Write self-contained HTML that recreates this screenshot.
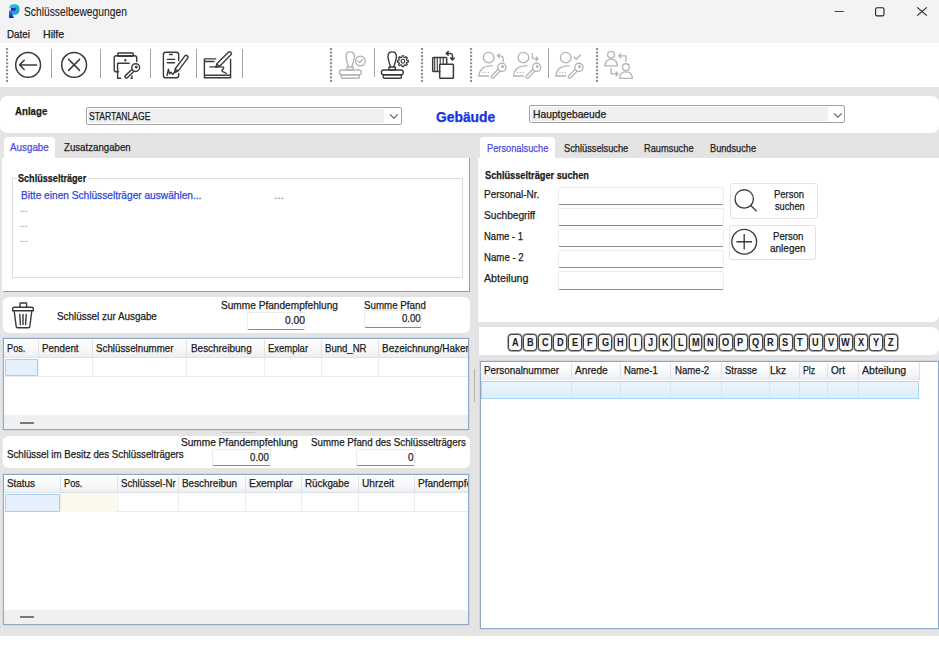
<!DOCTYPE html>
<html><head><meta charset="utf-8"><style>
html,body{margin:0;padding:0;width:939px;height:656px;overflow:hidden;background:#fff}
body{position:relative;font-family:"Liberation Sans",sans-serif;color:#1b1b1b}
div,span,svg{position:absolute;box-sizing:border-box}
.t{white-space:pre;transform-origin:0 0;-webkit-text-stroke:0.25px currentColor}
</style></head><body>
<div style="left:0px;top:0px;width:939px;height:43px;background:#f3f3f3"></div>
<div style="left:0px;top:43px;width:939px;height:44px;background:#fff"></div>
<div style="left:0px;top:87px;width:939px;height:549px;background:#e4e4e4"></div>
<div style="left:0px;top:636px;width:939px;height:20px;background:#fff"></div>
<svg style="left:0;top:0" width="40" height="24" viewBox="0 0 40 24">
<defs><linearGradient id="pg" x1="0" y1="0" x2="1" y2="1"><stop offset="0" stop-color="#2ad0a8"/><stop offset="1" stop-color="#1b8fe0"/></linearGradient>
<linearGradient id="ps" x1="0" y1="0" x2="0" y2="1"><stop offset="0" stop-color="#1a9ae8"/><stop offset="1" stop-color="#0a1ee0"/></linearGradient></defs>
<path d="M9.2 8.5 Q9.5 4.2 13.5 4.2 L15.5 4.2 Q19.5 4.4 19.5 9.4 Q19.4 14.6 14.5 14.8 L12.8 14.8 L12.8 10.8 L14.5 10.8 Q15.9 10.6 15.9 9.3 Q15.8 7.8 14.5 7.8 L11 7.8 Z" fill="url(#pg)"/>
<path d="M9 10.5 L12.8 10.5 L12.8 15.5 L14 17.9 L9 17.9 Z" fill="url(#ps)"/>
<rect x="10.8" y="7.8" width="5" height="3" fill="#1030e0"/>
</svg>
<svg style="left:820px;top:0" width="119" height="24" viewBox="820 0 119 24">
<path d="M834.6 11.5 H843.8" stroke="#333" stroke-width="0.9"/>
<rect x="875.6" y="7.7" width="8.4" height="8.2" rx="1.5" fill="none" stroke="#1f1f1f" stroke-width="1.1"/>
<path d="M917.2 7.4 L926.9 15.6 M926.9 7.4 L917.2 15.6" stroke="#1f1f1f" stroke-width="1.1"/>
</svg>
<svg style="left:5.2px;top:48.2px" width="4" height="36.5"><rect x="1" y="0.00" width="2.1" height="2" fill="#8e8e8e"/><rect x="1" y="3.55" width="2.1" height="2" fill="#8e8e8e"/><rect x="1" y="7.10" width="2.1" height="2" fill="#8e8e8e"/><rect x="1" y="10.65" width="2.1" height="2" fill="#8e8e8e"/><rect x="1" y="14.20" width="2.1" height="2" fill="#8e8e8e"/><rect x="1" y="17.75" width="2.1" height="2" fill="#8e8e8e"/><rect x="1" y="21.30" width="2.1" height="2" fill="#8e8e8e"/><rect x="1" y="24.85" width="2.1" height="2" fill="#8e8e8e"/><rect x="1" y="28.40" width="2.1" height="2" fill="#8e8e8e"/><rect x="1" y="31.95" width="2.1" height="2" fill="#8e8e8e"/></svg>
<div style="left:51.1px;top:48.5px;width:1.2000000000000028px;height:29.0px;background:#a4a4a4"></div>
<div style="left:100.1px;top:48.5px;width:1.2000000000000028px;height:29.0px;background:#a4a4a4"></div>
<div style="left:150.3px;top:48.5px;width:1.1999999999999886px;height:29.0px;background:#a4a4a4"></div>
<div style="left:196.1px;top:48.5px;width:1.1999999999999886px;height:29.0px;background:#a4a4a4"></div>
<div style="left:242.1px;top:48.5px;width:1.1999999999999886px;height:29.0px;background:#a4a4a4"></div>
<svg style="left:329.2px;top:48.2px" width="4" height="36.5"><rect x="1" y="0.00" width="2.1" height="2" fill="#8e8e8e"/><rect x="1" y="3.55" width="2.1" height="2" fill="#8e8e8e"/><rect x="1" y="7.10" width="2.1" height="2" fill="#8e8e8e"/><rect x="1" y="10.65" width="2.1" height="2" fill="#8e8e8e"/><rect x="1" y="14.20" width="2.1" height="2" fill="#8e8e8e"/><rect x="1" y="17.75" width="2.1" height="2" fill="#8e8e8e"/><rect x="1" y="21.30" width="2.1" height="2" fill="#8e8e8e"/><rect x="1" y="24.85" width="2.1" height="2" fill="#8e8e8e"/><rect x="1" y="28.40" width="2.1" height="2" fill="#8e8e8e"/><rect x="1" y="31.95" width="2.1" height="2" fill="#8e8e8e"/></svg>
<div style="left:373.8px;top:48px;width:1.1999999999999886px;height:29px;background:#a4a4a4"></div>
<svg style="left:420.2px;top:48.2px" width="4" height="36.5"><rect x="1" y="0.00" width="2.1" height="2" fill="#8e8e8e"/><rect x="1" y="3.55" width="2.1" height="2" fill="#8e8e8e"/><rect x="1" y="7.10" width="2.1" height="2" fill="#8e8e8e"/><rect x="1" y="10.65" width="2.1" height="2" fill="#8e8e8e"/><rect x="1" y="14.20" width="2.1" height="2" fill="#8e8e8e"/><rect x="1" y="17.75" width="2.1" height="2" fill="#8e8e8e"/><rect x="1" y="21.30" width="2.1" height="2" fill="#8e8e8e"/><rect x="1" y="24.85" width="2.1" height="2" fill="#8e8e8e"/><rect x="1" y="28.40" width="2.1" height="2" fill="#8e8e8e"/><rect x="1" y="31.95" width="2.1" height="2" fill="#8e8e8e"/></svg>
<svg style="left:469.1px;top:48.2px" width="4" height="36.5"><rect x="1" y="0.00" width="2.1" height="2" fill="#8e8e8e"/><rect x="1" y="3.55" width="2.1" height="2" fill="#8e8e8e"/><rect x="1" y="7.10" width="2.1" height="2" fill="#8e8e8e"/><rect x="1" y="10.65" width="2.1" height="2" fill="#8e8e8e"/><rect x="1" y="14.20" width="2.1" height="2" fill="#8e8e8e"/><rect x="1" y="17.75" width="2.1" height="2" fill="#8e8e8e"/><rect x="1" y="21.30" width="2.1" height="2" fill="#8e8e8e"/><rect x="1" y="24.85" width="2.1" height="2" fill="#8e8e8e"/><rect x="1" y="28.40" width="2.1" height="2" fill="#8e8e8e"/><rect x="1" y="31.95" width="2.1" height="2" fill="#8e8e8e"/></svg>
<div style="left:548.3px;top:48px;width:1.2000000000000455px;height:29.5px;background:#a4a4a4"></div>
<svg style="left:595.3px;top:48.2px" width="4" height="36.5"><rect x="1" y="0.00" width="2.1" height="2" fill="#8e8e8e"/><rect x="1" y="3.55" width="2.1" height="2" fill="#8e8e8e"/><rect x="1" y="7.10" width="2.1" height="2" fill="#8e8e8e"/><rect x="1" y="10.65" width="2.1" height="2" fill="#8e8e8e"/><rect x="1" y="14.20" width="2.1" height="2" fill="#8e8e8e"/><rect x="1" y="17.75" width="2.1" height="2" fill="#8e8e8e"/><rect x="1" y="21.30" width="2.1" height="2" fill="#8e8e8e"/><rect x="1" y="24.85" width="2.1" height="2" fill="#8e8e8e"/><rect x="1" y="28.40" width="2.1" height="2" fill="#8e8e8e"/><rect x="1" y="31.95" width="2.1" height="2" fill="#8e8e8e"/></svg>
<svg style="left:0;top:43px" width="939" height="44" viewBox="0 43 939 44" fill="none" stroke-linecap="round" stroke-linejoin="round">
<g stroke="#3a3a3a" stroke-width="1.5">
<circle cx="28.1" cy="64.9" r="12.4"/>
<path d="M19.6 64.9 H36.6 M19.6 64.9 L24.2 60.3 M19.6 64.9 L24.2 69.5"/>
<circle cx="74.1" cy="64.9" r="12.4"/>
<path d="M68.6 59.4 L79.6 70.4 M79.6 59.4 L68.6 70.4"/>
</g>
<g stroke="#3a3a3a" stroke-width="1.4">
<rect x="117.8" y="53" width="15.4" height="3.3" rx="0.6"/>
<path d="M118.5 71.8 H116.3 Q114.2 71.8 114.2 69.7 V57.8 Q114.2 55.8 116.3 55.8 H134.6 Q136.7 55.8 136.7 57.8 V61.6"/>
<path d="M129.2 63.3 H117.6 V78.2 H120.8 M132 76 V78.2 H131"/>
<circle cx="125.4" cy="60.2" r="0.5" fill="#3a3a3a"/>
<circle cx="135.7" cy="67.6" r="3.9"/>
<g transform="translate(135.7 67.6) rotate(136)"><path d="M3.8 -1.4 H13 Q14.4 -1.4 14.4 0 Q14.4 1.4 13 1.4 H3.8"/></g>
<circle cx="136.2" cy="67.1" r="0.7" fill="#3a3a3a"/>
</g>
<g stroke="#3a3a3a" stroke-width="1.4">
<path d="M178.7 60.4 V54.6 Q178.7 52.2 176.3 52.2 H165.8 Q163.4 52.2 163.4 54.6 V75.4 Q163.4 77.8 165.8 77.8 H176.3 Q178.7 77.8 178.7 75.4 V73.4"/>
<path d="M169.6 54.5 H172.2 M167.3 59.4 H174.6 M167.3 62.8 H174.6"/>
<g transform="translate(174.6 72.6) rotate(-53)"><path d="M0 0 L3.2 -1.8 H19.2 Q21 -1.8 21 0 Q21 1.8 19.2 1.8 H3.2 Z M3.2 -1.8 V1.8"/></g>
<path d="M167 75.6 L168.4 69.2 L169.6 73.9 L171 72.3 L172.8 74.4 L175.3 71"/>
</g>
<g stroke="#3a3a3a" stroke-width="1.4">
<path d="M215.8 58.9 H204.4 V77.8 H230.6 V59.3 M204.4 61.5 H214 M204.4 75.3 H230.6"/>
<g transform="translate(215.8 67.4) rotate(-45)"><path d="M0 0 L3.2 -1.8 H19.6 Q21.4 -1.8 21.4 0 Q21.4 1.8 19.6 1.8 H3.2 Z M3.2 -1.8 V1.8"/></g>
<path d="M209.8 66.9 H222.8 Q224.6 67.6 222.8 69.3 Q220.8 70.6 223.2 71.8 Q225.6 72.8 226.2 73.6"/>
</g>
<g stroke="#b4b4b4" stroke-width="1.4">
<path d="M348.5 66.9 Q346 59 346 56.5 Q346 51.9 350.1 51.9 Q354.4 51.9 354.4 56.5 Q354.4 59 351.8 66.9"/>
<rect x="346.9" y="67" width="6.5" height="2.9" rx="0.5"/>
<rect x="339.5" y="70" width="21.7" height="4.7" rx="2"/>
<rect x="341.2" y="74.7" width="18.2" height="3.6" rx="1.4"/>
<circle cx="360.4" cy="61" r="4.8"/>
<path d="M358.2 61.2 L359.7 62.6 L362.6 59.6"/>
</g>
<g stroke="#3a3a3a" stroke-width="1.4">
<path d="M390.5 66.9 Q388 59 388 56.5 Q388 51.9 392.1 51.9 Q396.4 51.9 396.4 56.5 Q396.4 59 393.8 66.9"/>
<rect x="388.9" y="67" width="6.5" height="2.9" rx="0.5"/>
<rect x="381.5" y="70" width="21.7" height="4.7" rx="2"/>
<rect x="383.2" y="74.7" width="18.2" height="3.6" rx="1.4"/>
<path d="M406.88 60.21 L408.33 60.34 L408.33 62.06 L406.88 62.19 L406.41 63.31 L407.35 64.43 L406.13 65.65 L405.01 64.71 L403.89 65.18 L403.76 66.63 L402.04 66.63 L401.91 65.18 L400.79 64.71 L399.67 65.65 L398.45 64.43 L399.39 63.31 L398.92 62.19 L397.47 62.06 L397.47 60.34 L398.92 60.21 L399.39 59.09 L398.45 57.97 L399.67 56.75 L400.79 57.69 L401.91 57.22 L402.04 55.77 L403.76 55.77 L403.89 57.22 L405.01 57.69 L406.13 56.75 L407.35 57.97 L406.41 59.09 Z" stroke-width="1.2"/><circle cx="402.9" cy="61.2" r="1.9" stroke-width="1.1"/>
</g>
<g stroke="#3a3a3a" stroke-width="1.5">
<path d="M439.7 71.6 H433.6 Q432.7 71.6 432.7 70.7 V58.5 Q432.7 57.6 433.6 57.6 H445.8 Q446.7 57.6 446.7 58.5 V64.3"/>
<path d="M434.7 58 V71.3 M437.3 58 V71.3 M440.2 58 V64.3 M443.2 58 V64.3" stroke-width="1.1"/>
<rect x="439.7" y="64.3" width="13.7" height="14" rx="0.9"/>
<path d="M446.5 53.4 H450.6 Q452.4 53.5 452.4 55.4 V59.6 M448.2 51.6 L446.3 53.4 L448.2 55.2 M450.6 58 L452.4 59.9 L454.2 58"/>
</g>
<g stroke="#b4b4b4" stroke-width="1.35" transform="translate(0 0)">
<circle cx="488.7" cy="57.6" r="5.3"/>
<path d="M492.1 65.9 Q480 65 478.7 76 H488.6"/>
<path d="M482.9 72.4 H483.1 M485.5 72.4 H485.7 M488.3 72.4 H488.5" stroke-width="1.2"/>
<circle cx="501.9" cy="67.3" r="4.1"/>
<g transform="translate(501.9 67.3) rotate(134)"><path d="M4 -1.4 H13.3 Q14.7 -1.4 14.7 0 Q14.7 1.4 13.3 1.4 H4"/></g>
<circle cx="502.5" cy="66.7" r="0.8" fill="#b4b4b4"/>
<path d="M503.2 61.5 V58.5 Q503.2 55.8 500.5 55.8 H497.6 M499.4 54 L497.4 55.8 L499.4 57.6"/>
</g><g stroke="#b4b4b4" stroke-width="1.35" transform="translate(34.7 0)">
<circle cx="488.7" cy="57.6" r="5.3"/>
<path d="M492.1 65.9 Q480 65 478.7 76 H488.6"/>
<path d="M482.9 72.4 H483.1 M485.5 72.4 H485.7 M488.3 72.4 H488.5" stroke-width="1.2"/>
<circle cx="501.9" cy="67.3" r="4.1"/>
<g transform="translate(501.9 67.3) rotate(134)"><path d="M4 -1.4 H13.3 Q14.7 -1.4 14.7 0 Q14.7 1.4 13.3 1.4 H4"/></g>
<circle cx="502.5" cy="66.7" r="0.8" fill="#b4b4b4"/>
<path d="M497.6 53.6 V56.6 Q497.6 58.8 499.9 58.8 H503.2 M501.5 57 L503.4 58.8 L501.5 60.6"/>
</g><g stroke="#b4b4b4" stroke-width="1.35" transform="translate(77 0)">
<circle cx="488.7" cy="57.6" r="5.3"/>
<path d="M492.1 65.9 Q480 65 478.7 76 H488.6"/>
<path d="M482.9 72.4 H483.1 M485.5 72.4 H485.7 M488.3 72.4 H488.5" stroke-width="1.2"/>
<circle cx="501.9" cy="67.3" r="4.1"/>
<g transform="translate(501.9 67.3) rotate(134)"><path d="M4 -1.4 H13.3 Q14.7 -1.4 14.7 0 Q14.7 1.4 13.3 1.4 H4"/></g>
<circle cx="502.5" cy="66.7" r="0.8" fill="#b4b4b4"/>
<path d="M497 57.3 L499.2 59.3 L503.6 54.9"/>
</g>
<g stroke="#b4b4b4" stroke-width="1.35">
<circle cx="611.1" cy="54.7" r="3.4"/>
<path d="M604.9 65.9 Q605.2 59.4 611.1 59.4 Q617.2 59.4 617.4 65.9 Z"/>
<circle cx="625.9" cy="67.2" r="3.4"/>
<path d="M619.7 78.3 Q620 71.9 625.9 71.9 Q632 71.9 632.4 78.3 Z"/>
<path d="M625.9 61.2 V55.8 H618.8 M620.8 53.8 L618.8 55.8 L620.8 57.8"/>
<path d="M611.1 68.5 V73.9 H618 M616 71.9 L618 73.9 L616 75.9"/>
</g>
</svg>
<div style="left:0px;top:96px;width:939px;height:37.30000000000001px;background:#fff;border-radius:7px"></div>
<div style="left:85.9px;top:106.9px;width:315.9px;height:18.099999999999994px;background:#fff;border:1.4px solid #a2a2a2;border-radius:2px"></div>
<div style="left:87.5px;top:108.6px;width:296.7px;height:14.800000000000011px;background:#f0f0f0"></div>
<svg style="left:388px;top:112px" width="12" height="8"><path d="M2 2.4 L5.9 6.2 L9.8 2.4" fill="none" stroke="#606060" stroke-width="1.1"/></svg>
<div style="left:529.4px;top:105.3px;width:316.1px;height:17.700000000000003px;background:#fff;border:1.4px solid #a2a2a2;border-radius:2px"></div>
<div style="left:531px;top:107px;width:296.5px;height:14.400000000000006px;background:#f0f0f0"></div>
<svg style="left:832px;top:110.5px" width="12" height="8"><path d="M2 2.4 L5.9 6.2 L9.8 2.4" fill="none" stroke="#606060" stroke-width="1.1"/></svg>
<div style="left:4px;top:137px;width:51px;height:21px;background:#fff;border-radius:4px 4px 0 0"></div>
<div style="left:2px;top:157.6px;width:468px;height:134.4px;background:#fff;border-right:1px solid #9c9c9c;border-bottom:1px solid #9c9c9c;"></div>
<div style="left:11.5px;top:177.6px;width:451.5px;height:100.4px;border:1px solid #dcdcdc"></div>
<div style="left:16.5px;top:170px;width:71.0px;height:10px;background:#fff"></div>
<div style="left:2px;top:291px;width:1px;height:340px;background:#ebebeb"></div>
<div style="left:2.8px;top:296.5px;width:467.2px;height:36.10000000000002px;background:#fff;border-radius:6px"></div>
<svg style="left:10px;top:300px" width="26" height="30" viewBox="10 300 26 30" fill="none" stroke="#3a3a3a" stroke-width="1.4" stroke-linejoin="round" stroke-linecap="round">
<path d="M20 307 V303.6 Q20 303 20.6 303 H26 Q26.6 303 26.6 303.6 V307"/>
<path d="M12.6 309 Q12.6 307.2 14.4 307.2 H31.6 Q33.4 307.2 33.4 309 V310.8 H12.6 Z"/>
<path d="M14.2 311 L16.2 326.6 Q16.4 327.8 17.6 327.8 H28.4 Q29.6 327.8 29.8 326.6 L31.8 311"/>
<path d="M19.8 314.5 L20.4 324.5 M23 314.5 V324.5 M26.2 314.5 L25.6 324.5"/>
</svg>
<div style="left:246.7px;top:312.4px;width:58.80000000000001px;height:17.600000000000023px;background:#fff;border:1px solid #ececec;border-bottom:1px solid #8a8a8a;border-radius:2px"></div>
<div style="left:363.8px;top:310px;width:58.099999999999966px;height:17.600000000000023px;background:#fff;border:1px solid #ececec;border-bottom:1px solid #8a8a8a;border-radius:2px"></div>
<div style="left:3px;top:337.8px;width:466px;height:92.19999999999999px;background:#fff;border:1px solid #8da9c6;box-shadow:0 0 0 0.6px #c3d1df"></div>
<div style="left:4px;top:338.8px;width:464px;height:19.399999999999977px;background:linear-gradient(#ffffff,#f7f8f9 60%,#eceef1);border-bottom:1px solid #dfe3e8"></div>
<div style="left:37.8px;top:339.8px;width:1.0px;height:18.399999999999977px;background:#dfe3e8"></div>
<div style="left:37.8px;top:358.2px;width:1.0px;height:18.399999999999977px;background:#ececec"></div>
<div style="left:91.5px;top:339.8px;width:1.0px;height:18.399999999999977px;background:#dfe3e8"></div>
<div style="left:91.5px;top:358.2px;width:1.0px;height:18.399999999999977px;background:#ececec"></div>
<div style="left:186.0px;top:339.8px;width:1.0px;height:18.399999999999977px;background:#dfe3e8"></div>
<div style="left:186.0px;top:358.2px;width:1.0px;height:18.399999999999977px;background:#ececec"></div>
<div style="left:263.5px;top:339.8px;width:1.0px;height:18.399999999999977px;background:#dfe3e8"></div>
<div style="left:263.5px;top:358.2px;width:1.0px;height:18.399999999999977px;background:#ececec"></div>
<div style="left:320.5px;top:339.8px;width:1.0px;height:18.399999999999977px;background:#dfe3e8"></div>
<div style="left:320.5px;top:358.2px;width:1.0px;height:18.399999999999977px;background:#ececec"></div>
<div style="left:377.7px;top:339.8px;width:1.0px;height:18.399999999999977px;background:#dfe3e8"></div>
<div style="left:377.7px;top:358.2px;width:1.0px;height:18.399999999999977px;background:#ececec"></div>
<div style="left:4px;top:375.59999999999997px;width:464px;height:1.0px;background:#ececec"></div>
<div style="left:4px;top:415.4px;width:464px;height:13.600000000000023px;background:#f0f0f0"></div>
<div style="left:19.5px;top:421.9px;width:14.5px;height:2.0px;background:#7a7a7a"></div>
<div style="left:5.1px;top:359.2px;width:32.699999999999996px;height:17.19999999999999px;background:#e4f1fc;border:1px solid #a6d0f2;border-radius:1px"></div>
<div style="left:222px;top:432px;width:33.30000000000001px;height:1.3999999999999773px;background:#c8c8c8"></div>
<div style="left:2.8px;top:435.8px;width:467.2px;height:32.39999999999998px;background:#fff;border-radius:6px"></div>
<div style="left:211.5px;top:448.8px;width:59.10000000000002px;height:17.19999999999999px;background:#fff;border:1px solid #ececec;border-bottom:1px solid #8a8a8a;border-radius:2px"></div>
<div style="left:356.3px;top:448.8px;width:59.099999999999966px;height:17.19999999999999px;background:#fff;border:1px solid #ececec;border-bottom:1px solid #8a8a8a;border-radius:2px"></div>
<div style="left:3px;top:473.8px;width:466px;height:150.8px;background:#fff;border:1px solid #8da9c6;box-shadow:0 0 0 0.6px #c3d1df"></div>
<div style="left:4px;top:474.8px;width:464px;height:18.0px;background:linear-gradient(#ffffff,#f7f8f9 60%,#eceef1);border-bottom:1px solid #dfe3e8"></div>
<div style="left:60.1px;top:475.8px;width:1.0px;height:17.0px;background:#dfe3e8"></div>
<div style="left:60.1px;top:492.8px;width:1.0px;height:19.19999999999999px;background:#ececec"></div>
<div style="left:116.5px;top:475.8px;width:1.0px;height:17.0px;background:#dfe3e8"></div>
<div style="left:116.5px;top:492.8px;width:1.0px;height:19.19999999999999px;background:#ececec"></div>
<div style="left:177.9px;top:475.8px;width:1.0px;height:17.0px;background:#dfe3e8"></div>
<div style="left:177.9px;top:492.8px;width:1.0px;height:19.19999999999999px;background:#ececec"></div>
<div style="left:244.5px;top:475.8px;width:1.0px;height:17.0px;background:#dfe3e8"></div>
<div style="left:244.5px;top:492.8px;width:1.0px;height:19.19999999999999px;background:#ececec"></div>
<div style="left:300.9px;top:475.8px;width:1.0px;height:17.0px;background:#dfe3e8"></div>
<div style="left:300.9px;top:492.8px;width:1.0px;height:19.19999999999999px;background:#ececec"></div>
<div style="left:357.5px;top:475.8px;width:1.0px;height:17.0px;background:#dfe3e8"></div>
<div style="left:357.5px;top:492.8px;width:1.0px;height:19.19999999999999px;background:#ececec"></div>
<div style="left:414.0px;top:475.8px;width:1.0px;height:17.0px;background:#dfe3e8"></div>
<div style="left:414.0px;top:492.8px;width:1.0px;height:19.19999999999999px;background:#ececec"></div>
<div style="left:4px;top:511.0px;width:464px;height:1.0px;background:#ececec"></div>
<div style="left:4px;top:609.6px;width:464px;height:14.0px;background:#f0f0f0"></div>
<div style="left:19.5px;top:616.1px;width:14.5px;height:2.0px;background:#7a7a7a"></div>
<div style="left:5px;top:494.2px;width:54.6px;height:17.400000000000034px;background:#e4f1fc;border:1px solid #a6d0f2;border-radius:1px"></div>
<div style="left:61.1px;top:493px;width:55.4px;height:18.600000000000023px;background:#fdf8ee"></div>
<div style="left:473.8px;top:369px;width:1.0px;height:33px;background:#b0b0b0"></div>
<div style="left:480.4px;top:137px;width:74.60000000000002px;height:21px;background:#fff;border-radius:4px 4px 0 0"></div>
<div style="left:478.4px;top:157.6px;width:460.6px;height:164.20000000000002px;background:#fff;border-radius:0 0 7px 0"></div>
<div style="left:558.2px;top:186.6px;width:165.5999999999999px;height:18.200000000000017px;background:#fff;border:1px solid #ececec;border-bottom:1px solid #8c8c8c;border-radius:2px"></div>
<div style="left:558.2px;top:207.6px;width:165.5999999999999px;height:18.200000000000017px;background:#fff;border:1px solid #ececec;border-bottom:1px solid #8c8c8c;border-radius:2px"></div>
<div style="left:558.2px;top:229px;width:165.5999999999999px;height:18.19999999999999px;background:#fff;border:1px solid #ececec;border-bottom:1px solid #8c8c8c;border-radius:2px"></div>
<div style="left:558.2px;top:250.2px;width:165.5999999999999px;height:18.19999999999999px;background:#fff;border:1px solid #ececec;border-bottom:1px solid #8c8c8c;border-radius:2px"></div>
<div style="left:558.2px;top:271.4px;width:165.5999999999999px;height:18.200000000000045px;background:#fff;border:1px solid #ececec;border-bottom:1px solid #8c8c8c;border-radius:2px"></div>
<div style="left:730.2px;top:183.4px;width:87.39999999999998px;height:35.19999999999999px;background:#fff;border:1px solid #e2e2e2;border-radius:3px"></div>
<div style="left:728.8px;top:224.6px;width:87.20000000000005px;height:35.79999999999998px;background:#fff;border:1px solid #e2e2e2;border-radius:3px"></div>
<svg style="left:728px;top:183px" width="40" height="80" viewBox="728 183 40 80" fill="none" stroke="#3c3c3c" stroke-width="1.35">
<circle cx="744.2" cy="198.9" r="9.2"/>
<path d="M750.8 205.5 L756.6 211.2"/>
<circle cx="744.2" cy="241.7" r="12.4"/>
<path d="M736.4 241.7 H752 M744.2 233.9 V249.5"/>
</svg>
<div style="left:478.6px;top:327.4px;width:460.4px;height:27.400000000000034px;background:#fff;border-radius:0 7px 7px 0"></div>
<div style="left:508.3px;top:334.2px;width:13.800000000000011px;height:16.600000000000023px;background:#f8f8f8;border:1px solid #404040;border-radius:3.5px;box-shadow:0 0 0 0.7px #8a8a8a"></div>
<div style="left:523.33px;top:334.2px;width:13.799999999999955px;height:16.600000000000023px;background:#f8f8f8;border:1px solid #404040;border-radius:3.5px;box-shadow:0 0 0 0.7px #8a8a8a"></div>
<div style="left:538.36px;top:334.2px;width:13.799999999999955px;height:16.600000000000023px;background:#f8f8f8;border:1px solid #404040;border-radius:3.5px;box-shadow:0 0 0 0.7px #8a8a8a"></div>
<div style="left:553.39px;top:334.2px;width:13.800000000000068px;height:16.600000000000023px;background:#f8f8f8;border:1px solid #404040;border-radius:3.5px;box-shadow:0 0 0 0.7px #8a8a8a"></div>
<div style="left:568.42px;top:334.2px;width:13.800000000000068px;height:16.600000000000023px;background:#f8f8f8;border:1px solid #404040;border-radius:3.5px;box-shadow:0 0 0 0.7px #8a8a8a"></div>
<div style="left:583.45px;top:334.2px;width:13.799999999999955px;height:16.600000000000023px;background:#f8f8f8;border:1px solid #404040;border-radius:3.5px;box-shadow:0 0 0 0.7px #8a8a8a"></div>
<div style="left:598.48px;top:334.2px;width:13.799999999999955px;height:16.600000000000023px;background:#f8f8f8;border:1px solid #404040;border-radius:3.5px;box-shadow:0 0 0 0.7px #8a8a8a"></div>
<div style="left:613.51px;top:334.2px;width:13.799999999999955px;height:16.600000000000023px;background:#f8f8f8;border:1px solid #404040;border-radius:3.5px;box-shadow:0 0 0 0.7px #8a8a8a"></div>
<div style="left:628.54px;top:334.2px;width:13.800000000000068px;height:16.600000000000023px;background:#f8f8f8;border:1px solid #404040;border-radius:3.5px;box-shadow:0 0 0 0.7px #8a8a8a"></div>
<div style="left:643.57px;top:334.2px;width:13.799999999999955px;height:16.600000000000023px;background:#f8f8f8;border:1px solid #404040;border-radius:3.5px;box-shadow:0 0 0 0.7px #8a8a8a"></div>
<div style="left:658.6px;top:334.2px;width:13.799999999999955px;height:16.600000000000023px;background:#f8f8f8;border:1px solid #404040;border-radius:3.5px;box-shadow:0 0 0 0.7px #8a8a8a"></div>
<div style="left:673.63px;top:334.2px;width:13.799999999999955px;height:16.600000000000023px;background:#f8f8f8;border:1px solid #404040;border-radius:3.5px;box-shadow:0 0 0 0.7px #8a8a8a"></div>
<div style="left:688.66px;top:334.2px;width:13.800000000000068px;height:16.600000000000023px;background:#f8f8f8;border:1px solid #404040;border-radius:3.5px;box-shadow:0 0 0 0.7px #8a8a8a"></div>
<div style="left:703.69px;top:334.2px;width:13.799999999999955px;height:16.600000000000023px;background:#f8f8f8;border:1px solid #404040;border-radius:3.5px;box-shadow:0 0 0 0.7px #8a8a8a"></div>
<div style="left:718.72px;top:334.2px;width:13.799999999999955px;height:16.600000000000023px;background:#f8f8f8;border:1px solid #404040;border-radius:3.5px;box-shadow:0 0 0 0.7px #8a8a8a"></div>
<div style="left:733.75px;top:334.2px;width:13.799999999999955px;height:16.600000000000023px;background:#f8f8f8;border:1px solid #404040;border-radius:3.5px;box-shadow:0 0 0 0.7px #8a8a8a"></div>
<div style="left:748.78px;top:334.2px;width:13.800000000000068px;height:16.600000000000023px;background:#f8f8f8;border:1px solid #404040;border-radius:3.5px;box-shadow:0 0 0 0.7px #8a8a8a"></div>
<div style="left:763.81px;top:334.2px;width:13.800000000000068px;height:16.600000000000023px;background:#f8f8f8;border:1px solid #404040;border-radius:3.5px;box-shadow:0 0 0 0.7px #8a8a8a"></div>
<div style="left:778.84px;top:334.2px;width:13.799999999999955px;height:16.600000000000023px;background:#f8f8f8;border:1px solid #404040;border-radius:3.5px;box-shadow:0 0 0 0.7px #8a8a8a"></div>
<div style="left:793.87px;top:334.2px;width:13.799999999999955px;height:16.600000000000023px;background:#f8f8f8;border:1px solid #404040;border-radius:3.5px;box-shadow:0 0 0 0.7px #8a8a8a"></div>
<div style="left:808.9px;top:334.2px;width:13.800000000000068px;height:16.600000000000023px;background:#f8f8f8;border:1px solid #404040;border-radius:3.5px;box-shadow:0 0 0 0.7px #8a8a8a"></div>
<div style="left:823.93px;top:334.2px;width:13.800000000000068px;height:16.600000000000023px;background:#f8f8f8;border:1px solid #404040;border-radius:3.5px;box-shadow:0 0 0 0.7px #8a8a8a"></div>
<div style="left:838.96px;top:334.2px;width:13.799999999999955px;height:16.600000000000023px;background:#f8f8f8;border:1px solid #404040;border-radius:3.5px;box-shadow:0 0 0 0.7px #8a8a8a"></div>
<div style="left:853.99px;top:334.2px;width:13.799999999999955px;height:16.600000000000023px;background:#f8f8f8;border:1px solid #404040;border-radius:3.5px;box-shadow:0 0 0 0.7px #8a8a8a"></div>
<div style="left:869.02px;top:334.2px;width:13.800000000000068px;height:16.600000000000023px;background:#f8f8f8;border:1px solid #404040;border-radius:3.5px;box-shadow:0 0 0 0.7px #8a8a8a"></div>
<div style="left:884.05px;top:334.2px;width:13.800000000000068px;height:16.600000000000023px;background:#f8f8f8;border:1px solid #404040;border-radius:3.5px;box-shadow:0 0 0 0.7px #8a8a8a"></div>
<div style="left:480.2px;top:360.5px;width:458.40000000000003px;height:268.5px;background:#fff;border:1px solid #8da9c6;box-shadow:0 0 0 0.6px #c3d1df"></div>
<div style="left:481.2px;top:361.5px;width:438.2px;height:18.80000000000001px;background:linear-gradient(#ffffff,#f7f8f9 60%,#eceef1);border-bottom:1px solid #dfe3e8"></div>
<div style="left:571.1px;top:362.5px;width:1.0px;height:17.80000000000001px;background:#dfe3e8"></div>
<div style="left:571.1px;top:380.3px;width:1.0px;height:0.0px;background:#ececec"></div>
<div style="left:619.5px;top:362.5px;width:1.0px;height:17.80000000000001px;background:#dfe3e8"></div>
<div style="left:619.5px;top:380.3px;width:1.0px;height:0.0px;background:#ececec"></div>
<div style="left:670.3px;top:362.5px;width:1.0px;height:17.80000000000001px;background:#dfe3e8"></div>
<div style="left:670.3px;top:380.3px;width:1.0px;height:0.0px;background:#ececec"></div>
<div style="left:721.3px;top:362.5px;width:1.0px;height:17.80000000000001px;background:#dfe3e8"></div>
<div style="left:721.3px;top:380.3px;width:1.0px;height:0.0px;background:#ececec"></div>
<div style="left:768.5px;top:362.5px;width:1.0px;height:17.80000000000001px;background:#dfe3e8"></div>
<div style="left:768.5px;top:380.3px;width:1.0px;height:0.0px;background:#ececec"></div>
<div style="left:798.8px;top:362.5px;width:1.0px;height:17.80000000000001px;background:#dfe3e8"></div>
<div style="left:798.8px;top:380.3px;width:1.0px;height:0.0px;background:#ececec"></div>
<div style="left:826.9px;top:362.5px;width:1.0px;height:17.80000000000001px;background:#dfe3e8"></div>
<div style="left:826.9px;top:380.3px;width:1.0px;height:0.0px;background:#ececec"></div>
<div style="left:857.9px;top:362.5px;width:1.0px;height:17.80000000000001px;background:#dfe3e8"></div>
<div style="left:857.9px;top:380.3px;width:1.0px;height:0.0px;background:#ececec"></div>
<div style="left:481.2px;top:379.3px;width:438.2px;height:1.0px;background:#ececec"></div>
<div style="left:919.4px;top:361.5px;width:1.0px;height:18.80000000000001px;background:#dfe3e8"></div>
<div style="left:481.2px;top:381.3px;width:438.2px;height:17.69999999999999px;background:linear-gradient(#eaf4fd,#ddeefc);border:1px solid #a8d4f5"></div>
<div style="left:571.1px;top:382.3px;width:1.0px;height:15.699999999999989px;background:#d5e6f3"></div>
<div style="left:619.5px;top:382.3px;width:1.0px;height:15.699999999999989px;background:#d5e6f3"></div>
<div style="left:670.3px;top:382.3px;width:1.0px;height:15.699999999999989px;background:#d5e6f3"></div>
<div style="left:721.3px;top:382.3px;width:1.0px;height:15.699999999999989px;background:#d5e6f3"></div>
<div style="left:768.5px;top:382.3px;width:1.0px;height:15.699999999999989px;background:#d5e6f3"></div>
<div style="left:798.8px;top:382.3px;width:1.0px;height:15.699999999999989px;background:#d5e6f3"></div>
<div style="left:826.9px;top:382.3px;width:1.0px;height:15.699999999999989px;background:#d5e6f3"></div>
<div style="left:857.9px;top:382.3px;width:1.0px;height:15.699999999999989px;background:#d5e6f3"></div>
<span class="t" style="left:24.30px;top:6.00px;font-size:12px;line-height:12px;transform:scaleX(0.8567);-webkit-text-stroke:0.1px currentColor;">Schlüsselbewegungen</span>
<span class="t" style="left:6.80px;top:29.00px;font-size:11px;line-height:11px;transform:scaleX(0.8885);">Datei</span>
<span class="t" style="left:43.30px;top:29.00px;font-size:11px;line-height:11px;transform:scaleX(0.9636);">Hilfe</span>
<span class="t" style="left:15.10px;top:106.00px;font-size:11px;line-height:11px;font-weight:700;transform:scaleX(0.8811);">Anlage</span>
<span class="t" style="left:89.10px;top:111.00px;font-size:11px;line-height:11px;transform:scaleX(0.7785);">STARTANLAGE</span>
<span class="t" style="left:436.10px;top:110.00px;font-size:14px;line-height:14px;font-weight:700;color:#1432e2;transform:scaleX(0.9883);">Gebäude</span>
<span class="t" style="left:532.70px;top:109.00px;font-size:11px;line-height:11px;transform:scaleX(0.9359);">Hauptgebaeude</span>
<span class="t" style="left:10.20px;top:142.00px;font-size:11px;line-height:11px;color:#4a4ae0;transform:scaleX(0.8930);">Ausgabe</span>
<span class="t" style="left:64.20px;top:142.00px;font-size:11px;line-height:11px;transform:scaleX(0.8789);">Zusatzangaben</span>
<span class="t" style="left:18.40px;top:173.00px;font-size:11px;line-height:11px;font-weight:700;transform:scaleX(0.8265);">Schlüsselträger</span>
<span class="t" style="left:20.50px;top:190.00px;font-size:11px;line-height:11px;color:#2e46d8;transform:scaleX(0.9221);">Bitte einen Schlüsselträger auswählen...</span>
<span class="t" style="left:273.79px;top:190.00px;font-size:11px;line-height:11px;color:#707070;transform:scaleX(1.1125);-webkit-text-stroke:0px currentColor;">...</span>
<span class="t" style="left:19.68px;top:203.00px;font-size:11px;line-height:11px;color:#7a7a7a;transform:scaleX(0.8250);-webkit-text-stroke:0px currentColor;">...</span>
<span class="t" style="left:19.68px;top:218.00px;font-size:11px;line-height:11px;color:#7a7a7a;transform:scaleX(0.8250);-webkit-text-stroke:0px currentColor;">...</span>
<span class="t" style="left:19.68px;top:233.00px;font-size:11px;line-height:11px;color:#7a7a7a;transform:scaleX(0.8250);-webkit-text-stroke:0px currentColor;">...</span>
<span class="t" style="left:57.10px;top:311.00px;font-size:11px;line-height:11px;transform:scaleX(0.8973);">Schlüssel zur Ausgabe</span>
<span class="t" style="left:221.10px;top:300.00px;font-size:11px;line-height:11px;transform:scaleX(0.9197);">Summe Pfandempfehlung</span>
<span class="t" style="left:364.40px;top:300.00px;font-size:11px;line-height:11px;transform:scaleX(0.8870);">Summe Pfand</span>
<span class="t" style="left:284.80px;top:315.00px;font-size:11px;line-height:11px;transform:scaleX(0.9333);">0.00</span>
<span class="t" style="left:402.40px;top:313.00px;font-size:11px;line-height:11px;transform:scaleX(0.8714);">0.00</span>
<span class="t" style="left:7.30px;top:343.00px;font-size:11px;line-height:11px;transform:scaleX(0.8364);">Pos.</span>
<span class="t" style="left:41.80px;top:343.00px;font-size:11px;line-height:11px;transform:scaleX(0.8929);">Pendent</span>
<span class="t" style="left:95.90px;top:343.00px;font-size:11px;line-height:11px;transform:scaleX(0.8864);">Schlüsselnummer</span>
<span class="t" style="left:190.60px;top:343.00px;font-size:11px;line-height:11px;transform:scaleX(0.9015);">Beschreibung</span>
<span class="t" style="left:268.00px;top:343.00px;font-size:11px;line-height:11px;transform:scaleX(0.8617);">Exemplar</span>
<span class="t" style="left:324.50px;top:343.00px;font-size:11px;line-height:11px;transform:scaleX(0.8702);">Bund_NR</span>
<div style="left:378px;top:340px;width:90px;height:18px;overflow:hidden"><div style="left:-378px;top:-340px;width:939px;height:656px"><span class="t" style="left:382.00px;top:343.00px;font-size:11px;line-height:11px;transform:scaleX(0.9050);">Bezeichnung/Hakenplatz</span></div></div>
<span class="t" style="left:7.30px;top:449.00px;font-size:11px;line-height:11px;transform:scaleX(0.8840);">Schlüssel im Besitz des Schlüsselträgers</span>
<span class="t" style="left:181.30px;top:437.00px;font-size:11px;line-height:11px;transform:scaleX(0.9181);">Summe Pfandempfehlung</span>
<span class="t" style="left:310.70px;top:437.00px;font-size:11px;line-height:11px;transform:scaleX(0.8851);">Summe Pfand des Schlüsselträgers</span>
<span class="t" style="left:250.00px;top:452.00px;font-size:11px;line-height:11px;transform:scaleX(0.8810);">0.00</span>
<span class="t" style="left:408.10px;top:452.00px;font-size:11px;line-height:11px;transform:scaleX(0.9000);">0</span>
<span class="t" style="left:7.30px;top:478.00px;font-size:11px;line-height:11px;transform:scaleX(0.8968);">Status</span>
<span class="t" style="left:64.00px;top:478.00px;font-size:11px;line-height:11px;transform:scaleX(0.8364);">Pos.</span>
<span class="t" style="left:120.70px;top:478.00px;font-size:11px;line-height:11px;transform:scaleX(0.8762);">Schlüssel-Nr</span>
<span class="t" style="left:182.30px;top:478.00px;font-size:11px;line-height:11px;transform:scaleX(0.9016);">Beschreibun</span>
<span class="t" style="left:248.60px;top:478.00px;font-size:11px;line-height:11px;transform:scaleX(0.9426);">Exemplar</span>
<span class="t" style="left:305.40px;top:478.00px;font-size:11px;line-height:11px;transform:scaleX(0.8940);">Rückgabe</span>
<span class="t" style="left:361.60px;top:478.00px;font-size:11px;line-height:11px;transform:scaleX(0.9229);">Uhrzeit</span>
<div style="left:415px;top:475px;width:53px;height:17px;overflow:hidden"><div style="left:-415px;top:-475px;width:939px;height:656px"><span class="t" style="left:418.30px;top:478.00px;font-size:11px;line-height:11px;transform:scaleX(0.9100);">Pfandempfehlung</span></div></div>
<span class="t" style="left:486.90px;top:143.00px;font-size:11px;line-height:11px;color:#4a4ae0;transform:scaleX(0.8425);">Personalsuche</span>
<span class="t" style="left:563.70px;top:143.00px;font-size:11px;line-height:11px;transform:scaleX(0.8408);">Schlüsselsuche</span>
<span class="t" style="left:643.80px;top:143.00px;font-size:11px;line-height:11px;transform:scaleX(0.8441);">Raumsuche</span>
<span class="t" style="left:709.60px;top:143.00px;font-size:11px;line-height:11px;transform:scaleX(0.8364);">Bundsuche</span>
<span class="t" style="left:485.10px;top:170.00px;font-size:11px;line-height:11px;font-weight:700;transform:scaleX(0.8379);">Schlüsselträger suchen</span>
<span class="t" style="left:483.90px;top:189.00px;font-size:11px;line-height:11px;transform:scaleX(0.9049);">Personal-Nr.</span>
<span class="t" style="left:483.90px;top:210.00px;font-size:11px;line-height:11px;transform:scaleX(0.9232);">Suchbegriff</span>
<span class="t" style="left:483.90px;top:231.00px;font-size:11px;line-height:11px;transform:scaleX(0.8644);">Name - 1</span>
<span class="t" style="left:483.90px;top:252.00px;font-size:11px;line-height:11px;transform:scaleX(0.8778);">Name - 2</span>
<span class="t" style="left:483.90px;top:273.00px;font-size:11px;line-height:11px;transform:scaleX(0.9696);">Abteilung</span>
<span class="t" style="left:774.40px;top:189.00px;font-size:11px;line-height:11px;transform:scaleX(0.8629);">Person</span>
<span class="t" style="left:775.10px;top:201.00px;font-size:11px;line-height:11px;transform:scaleX(0.8371);">suchen</span>
<span class="t" style="left:772.50px;top:231.00px;font-size:11px;line-height:11px;transform:scaleX(0.8743);">Person</span>
<span class="t" style="left:769.90px;top:243.00px;font-size:11px;line-height:11px;transform:scaleX(0.9077);">anlegen</span>
<span class="t" style="left:511.88px;top:338.00px;font-size:10px;line-height:10px;font-weight:700;transform:scaleX(0.9200);-webkit-text-stroke:0px currentColor;">A</span>
<span class="t" style="left:526.91px;top:338.00px;font-size:10px;line-height:10px;font-weight:700;transform:scaleX(0.9200);-webkit-text-stroke:0px currentColor;">B</span>
<span class="t" style="left:541.94px;top:338.00px;font-size:10px;line-height:10px;font-weight:700;transform:scaleX(0.9200);-webkit-text-stroke:0px currentColor;">C</span>
<span class="t" style="left:556.97px;top:338.00px;font-size:10px;line-height:10px;font-weight:700;transform:scaleX(0.9200);-webkit-text-stroke:0px currentColor;">D</span>
<span class="t" style="left:572.00px;top:338.00px;font-size:10px;line-height:10px;font-weight:700;transform:scaleX(0.9200);-webkit-text-stroke:0px currentColor;">E</span>
<span class="t" style="left:587.49px;top:338.00px;font-size:10px;line-height:10px;font-weight:700;transform:scaleX(0.9200);-webkit-text-stroke:0px currentColor;">F</span>
<span class="t" style="left:601.60px;top:338.00px;font-size:10px;line-height:10px;font-weight:700;transform:scaleX(0.9200);-webkit-text-stroke:0px currentColor;">G</span>
<span class="t" style="left:617.09px;top:338.00px;font-size:10px;line-height:10px;font-weight:700;transform:scaleX(0.9200);-webkit-text-stroke:0px currentColor;">H</span>
<span class="t" style="left:633.96px;top:338.00px;font-size:10px;line-height:10px;font-weight:700;transform:scaleX(0.9200);-webkit-text-stroke:0px currentColor;">I</span>
<span class="t" style="left:648.07px;top:338.00px;font-size:10px;line-height:10px;font-weight:700;transform:scaleX(0.9200);-webkit-text-stroke:0px currentColor;">J</span>
<span class="t" style="left:662.18px;top:338.00px;font-size:10px;line-height:10px;font-weight:700;transform:scaleX(0.9200);-webkit-text-stroke:0px currentColor;">K</span>
<span class="t" style="left:677.67px;top:338.00px;font-size:10px;line-height:10px;font-weight:700;transform:scaleX(0.9200);-webkit-text-stroke:0px currentColor;">L</span>
<span class="t" style="left:691.78px;top:338.00px;font-size:10px;line-height:10px;font-weight:700;transform:scaleX(0.9200);-webkit-text-stroke:0px currentColor;">M</span>
<span class="t" style="left:707.27px;top:338.00px;font-size:10px;line-height:10px;font-weight:700;transform:scaleX(0.9200);-webkit-text-stroke:0px currentColor;">N</span>
<span class="t" style="left:721.84px;top:338.00px;font-size:10px;line-height:10px;font-weight:700;transform:scaleX(0.9200);-webkit-text-stroke:0px currentColor;">O</span>
<span class="t" style="left:737.33px;top:338.00px;font-size:10px;line-height:10px;font-weight:700;transform:scaleX(0.9200);-webkit-text-stroke:0px currentColor;">P</span>
<span class="t" style="left:751.90px;top:338.00px;font-size:10px;line-height:10px;font-weight:700;transform:scaleX(0.9200);-webkit-text-stroke:0px currentColor;">Q</span>
<span class="t" style="left:767.39px;top:338.00px;font-size:10px;line-height:10px;font-weight:700;transform:scaleX(0.9200);-webkit-text-stroke:0px currentColor;">R</span>
<span class="t" style="left:782.42px;top:338.00px;font-size:10px;line-height:10px;font-weight:700;transform:scaleX(0.9200);-webkit-text-stroke:0px currentColor;">S</span>
<span class="t" style="left:797.45px;top:338.00px;font-size:10px;line-height:10px;font-weight:700;transform:scaleX(0.9200);-webkit-text-stroke:0px currentColor;">T</span>
<span class="t" style="left:812.48px;top:338.00px;font-size:10px;line-height:10px;font-weight:700;transform:scaleX(0.9200);-webkit-text-stroke:0px currentColor;">U</span>
<span class="t" style="left:827.51px;top:338.00px;font-size:10px;line-height:10px;font-weight:700;transform:scaleX(0.9200);-webkit-text-stroke:0px currentColor;">V</span>
<span class="t" style="left:841.16px;top:338.00px;font-size:10px;line-height:10px;font-weight:700;transform:scaleX(0.9200);-webkit-text-stroke:0px currentColor;">W</span>
<span class="t" style="left:857.57px;top:338.00px;font-size:10px;line-height:10px;font-weight:700;transform:scaleX(0.9200);-webkit-text-stroke:0px currentColor;">X</span>
<span class="t" style="left:872.60px;top:338.00px;font-size:10px;line-height:10px;font-weight:700;transform:scaleX(0.9200);-webkit-text-stroke:0px currentColor;">Y</span>
<span class="t" style="left:888.09px;top:338.00px;font-size:10px;line-height:10px;font-weight:700;transform:scaleX(0.9200);-webkit-text-stroke:0px currentColor;">Z</span>
<span class="t" style="left:483.60px;top:365.00px;font-size:11px;line-height:11px;transform:scaleX(0.8952);">Personalnummer</span>
<span class="t" style="left:575.40px;top:365.00px;font-size:11px;line-height:11px;transform:scaleX(0.9229);">Anrede</span>
<span class="t" style="left:623.90px;top:365.00px;font-size:11px;line-height:11px;transform:scaleX(0.8615);">Name-1</span>
<span class="t" style="left:674.60px;top:365.00px;font-size:11px;line-height:11px;transform:scaleX(0.8744);">Name-2</span>
<span class="t" style="left:724.60px;top:365.00px;font-size:11px;line-height:11px;transform:scaleX(0.8595);">Strasse</span>
<span class="t" style="left:770.10px;top:365.00px;font-size:11px;line-height:11px;transform:scaleX(0.9412);">Lkz</span>
<span class="t" style="left:802.80px;top:365.00px;font-size:11px;line-height:11px;transform:scaleX(0.7933);">Plz</span>
<span class="t" style="left:830.60px;top:365.00px;font-size:11px;line-height:11px;transform:scaleX(0.9125);">Ort</span>
<span class="t" style="left:861.90px;top:365.00px;font-size:11px;line-height:11px;transform:scaleX(0.9630);">Abteilung</span>
</body></html>
